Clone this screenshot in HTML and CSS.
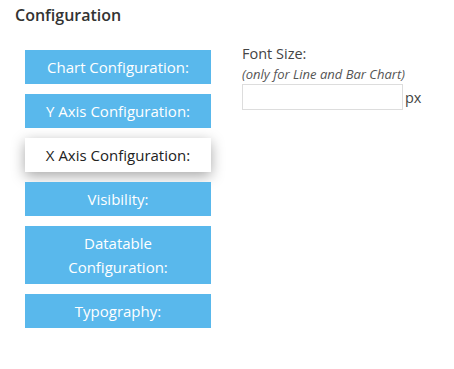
FILE: index.html
```html
<!DOCTYPE html>
<html lang="en">
<head>
  <meta charset="UTF-8">
  <title>Configuration</title>
  <link rel="stylesheet" href="styles.css">
</head>
<body>
  <h1 class="title">Configuration</h1>
  <div class="config">
    <!-- Tabs -->
    <div class="tabs">
      <div class="tab">Chart Configuration:</div>
      <div class="tab">Y Axis Configuration:</div>
      <div class="tab active">X Axis Configuration:</div>
      <div class="tab">Visibility:</div>
      <div class="tab">Datatable<br>Configuration:</div>
      <div class="tab">Typography:</div>
    </div>

    <!-- Settings -->
    <div class="panel">
      <label for="fontSize">Font Size:</label>
      <div class="hint">(only for Line and Bar Chart)</div>
      <div class="field">
        <input type="text" id="fontSize">
        <span class="unit">px</span>
      </div>
    </div>
  </div>
</body>
</html>
```

FILE: styles.css
```css
body {
  font-family: "Open Sans", sans-serif;
  margin: 0;
  color: #333;
  background: #fff;
}
.title {
  font-size: 16px;
  font-weight: 600;
  margin: 0;
  padding: 4px 15px 0;
  line-height: 22px;
}
.config {
  display: flex;
  padding: 24px 0 0 25px;
  gap: 31px;
}
.tabs {
  width: 186px;
  display: flex;
  flex-direction: column;
  gap: 10px;
}
.tab {
  background-color: #59b8ec;
  color: #fff;
  font-size: 15px;
  text-align: center;
  line-height: 24px;
  padding: 5px 0;
}
.tab.active {
  background-color: #fff;
  color: #222;
  box-shadow: 0 4px 14px rgba(0, 0, 0, 0.35);
}
.panel {
  margin-top: -6px;
  color: #444;
}
label {
  display: block;
  font-size: 14.5px;
  line-height: 20px;
}
.hint {
  font-size: 13px;
  font-style: italic;
  color: #555;
  line-height: 17px;
  margin-top: 2px;
}
.field {
  display: flex;
  align-items: center;
  margin-top: 1px;
}
input {
  width: 161px;
  height: 26px;
  box-sizing: border-box;
  border: 1px solid #ddd;
  margin: 0;
  padding: 2px 6px;
}
.unit {
  font-size: 14.5px;
  margin-left: 2px;
}
```
